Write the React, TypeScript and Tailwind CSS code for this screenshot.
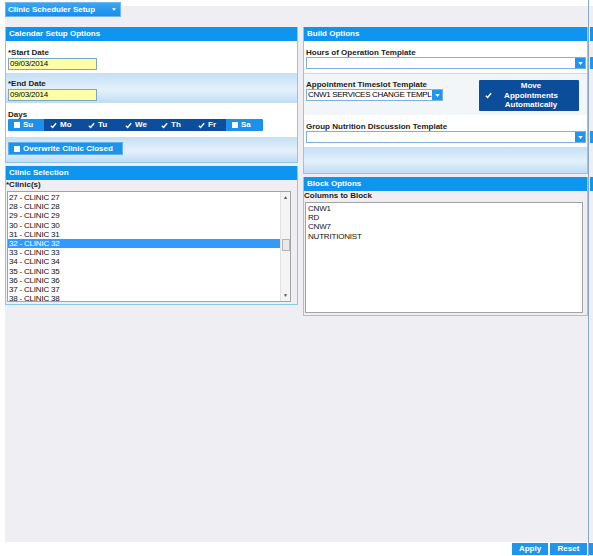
const font = "font-['Liberation_Sans',Arial,sans-serif]";

const clinics = Array.from({ length: 12 }, (_, i) => 27 + i);
const blockColumns = ["CNW1", "RD", "CNW7", "NUTRITIONIST"];
const days = [
  { label: "Su", on: false, w: "w-[36px]" },
  { label: "Mo", on: true, w: "w-[38px]" },
  { label: "Tu", on: true, w: "w-[37px]" },
  { label: "We", on: true, w: "w-[36px]" },
  { label: "Th", on: true, w: "w-[37px]" },
  { label: "Fr", on: true, w: "w-[34px]" },
  { label: "Sa", on: false, w: "w-[37px]" },
];

function Check({ className = "" }: { className?: string }) {
  return (
    <svg viewBox="0 0 8 8" className={"h-[7px] w-[7px] " + className}>
      <path d="M1 4.3 L3 6.3 L7 1.5" fill="none" stroke="white" strokeWidth="1.6" />
    </svg>
  );
}

function Box() {
  return <span className="inline-block h-[6px] w-[6px] bg-white" />;
}

function Arrow() {
  return (
    <span className="flex h-full w-[10px] items-center justify-center bg-[#1e95ee]">
      <svg viewBox="0 0 6 4" className="h-[3px] w-[5px]">
        <path d="M0 0 H6 L3 4 Z" fill="white" />
      </svg>
    </span>
  );
}

function Header({ title }: { title: string }) {
  return (
    <div className="flex h-[14px] items-center bg-[#0e95ef] pl-[3px] text-[8px] font-bold text-white">
      {title}
    </div>
  );
}

const gradient = "bg-[linear-gradient(to_bottom,#c4dff5,#e4f1fb_55%,#c0dcf3)]";

function DateField({ label, value }: { label: string; value: string }) {
  return (
    <div>
      <div className="h-[9px] text-[8px] font-bold leading-[9px] text-[#222]">{label}</div>
      <div className="mt-[1px] flex h-[12px] w-[89px] items-center border border-[#76a9c4] bg-[#ffffa6] pl-[1px] text-[8px] tracking-[-0.2px] text-black">
        {value}
      </div>
    </div>
  );
}

function Select({ value = "", width }: { value?: string; width: string }) {
  return (
    <div className={"flex h-[12px] items-stretch border border-[#7fb2d8] bg-white " + width}>
      <span className="min-w-0 flex-1 overflow-hidden whitespace-nowrap pl-[1px] text-[8px] leading-[10px] tracking-[-0.3px] text-black">
        {value}
      </span>
      <Arrow />
    </div>
  );
}

export default function App() {
  return (
    <div className={"flex h-[556px] w-[593px] overflow-hidden bg-white " + font}>
      <div className="flex w-[588px] flex-col">
        <div className="ml-[5px] mt-[6px] flex h-[536px] flex-col bg-[#efeff3]">
          <div className="-mt-[4px] flex h-[15px] w-[116px] items-center justify-between border border-[#6fb7ee] bg-[linear-gradient(to_bottom,#3aa5f4,#178eea)] pl-[2px] pr-[4px] text-[8px] font-bold text-white">
            <span>Clinic Scheduler Setup</span>
            <svg viewBox="0 0 6 4" className="h-[3px] w-[4px]">
              <path d="M0 0 H6 L3 4 Z" fill="white" />
            </svg>
          </div>

          <div className="mt-[10px] flex items-start">
            {/* left column */}
            <div className="flex w-[293px] flex-col">
              <div className="h-[110px] border-x border-[#8dc7ea] bg-white">
                <Header title="Calendar Setup Options" />
                <div className="h-[32px] px-[2px] pt-[7px]">
                  <DateField label="*Start Date" value="09/03/2014" />
                </div>
                <div className={"h-[30px] px-[2px] pt-[6px] " + gradient}>
                  <DateField label="*End Date" value="09/03/2014" />
                </div>
                <div className="h-[34px] px-[2px] pt-[7px]">
                  <div className="h-[9px] text-[8px] font-bold leading-[9px] text-[#222]">Days</div>
                  <div className="flex h-[12px] w-[255px] overflow-hidden rounded-[1px]">
                    {days.map((d) => (
                      <div
                        key={d.label}
                        className={
                          "flex items-center gap-[3px] pl-[6px] text-[8px] font-bold text-white " +
                          d.w +
                          (d.on ? " bg-[#0c4e9c]" : " bg-[#1b90ec]")
                        }
                      >
                        {d.on ? <Check /> : <Box />}
                        {d.label}
                      </div>
                    ))}
                  </div>
                </div>
              </div>
              <div className={"h-[26px] border-x border-b border-[#8dc7ea] px-[2px] pt-[5px] " + gradient}>
                <div className="flex h-[13px] w-[115px] items-center gap-[3px] border border-[#63b1ec] bg-[#1c93ee] pl-[5px] text-[8px] font-bold text-white">
                  <Box />
                  Overwrite Clinic Closed
                </div>
              </div>

              <div className="mt-[3px] h-[139px] border-x border-b border-[#8dc7ea]">
                <Header title="Clinic Selection" />
                <div className="h-[11px] text-[8px] font-bold leading-[10px] text-[#222]">*Clinic(s)</div>
                <div className="ml-[1px] flex h-[111px] w-[284px] border border-[#a3a3a3] bg-white">
                  <div className="flex-1 pt-[1px] text-[8px] leading-[9.2px] tracking-[-0.2px] text-[#111]">
                    {clinics.map((n) => (
                      <div
                        key={n}
                        className={"pl-[1px] " + (n === 32 ? "bg-[#3399ff] text-white" : "")}
                      >
                        {n} - CLINIC {n}
                      </div>
                    ))}
                  </div>
                  <div className="flex w-[10px] flex-col items-center border-l border-[#e2e2e2] bg-[#f4f4f4]">
                    <span className="mt-[3px] text-[5px] leading-[5px] text-[#555]">▲</span>
                    <div className="mt-[39px] h-[12px] w-[8px] border border-[#b5b5b5] bg-[#e9e9e9]" />
                    <span className="mt-auto mb-[3px] text-[5px] leading-[5px] text-[#555]">▼</span>
                  </div>
                </div>
              </div>
            </div>

            {/* right column */}
            <div className="ml-[5px] flex w-[285px] flex-col">
              <div className="h-[120px] border-x border-[#8dc7ea] bg-white">
                <Header title="Build Options" />
                <div className="h-[32px] px-[2px] pt-[7px]">
                  <div className="h-[9px] text-[8px] font-bold leading-[9px] text-[#222]">Hours of Operation Template</div>
                  <Select width="w-[280px]" />
                </div>
                <div className="flex h-[42px] border-t border-[#b9dbf3] bg-[#f3f6f9] px-[2px] pt-[6px]">
                  <div>
                    <div className="h-[9px] text-[8px] font-bold leading-[9px] text-[#222]">Appointment Timeslot Template</div>
                    <Select value="CNW1 SERVICES CHANGE TEMPL" width="w-[137px]" />
                  </div>
                  <div className="ml-[36px] flex h-[31px] w-[100px] items-center rounded-[1px] bg-[#0c4d9b] text-[8px] font-bold leading-[9.5px] text-white">
                    <Check className="ml-[6px]" />
                    <div className="ml-[3px] flex-1 pr-[12px] text-center">
                      Move
                      <br />
                      Appointments
                      <br />
                      Automatically
                    </div>
                  </div>
                </div>
                <div className="h-[32px] px-[2px] pt-[7px]">
                  <div className="h-[9px] text-[8px] font-bold leading-[9px] text-[#222]">Group Nutrition Discussion Template</div>
                  <Select width="w-[280px]" />
                </div>
              </div>
              <div className={"h-[27px] border-x border-b border-[#8dc7ea] " + gradient} />

              <div className="mt-[3px] h-[139px] border-x border-b border-[#8dc7ea]">
                <Header title="Block Options" />
                <div className="h-[11px] text-[8px] font-bold leading-[10px] text-[#222]">Columns to Block</div>
                <div className="ml-[1px] h-[111px] w-[278px] border border-[#a3a3a3] bg-white pl-[2px] pt-[1px] text-[8px] leading-[9.2px] tracking-[-0.2px] text-[#111]">
                  {blockColumns.map((c) => (
                    <div key={c}>{c}</div>
                  ))}
                </div>
              </div>
            </div>
          </div>
        </div>

        <div className="mt-[1px] flex justify-end gap-[2px] pr-[1px]">
          <div className="flex h-[12px] w-[36px] items-center justify-center bg-[#1e96ee] text-[8px] font-bold text-white">Apply</div>
          <div className="flex h-[12px] w-[37px] items-center justify-center bg-[#1e96ee] text-[8px] font-bold text-white">Reset</div>
        </div>
      </div>

      <div className="w-[1px] bg-[#8aa6c8]" />

      <div className="flex w-[4px] flex-col">
        <div className="mt-[6px] h-[536px] bg-[#efeff3] pl-[1px]">
          <div className="mt-[21px] h-[14px] bg-[#0e95ef]" />
          <div className="mt-[16px] h-[12px] bg-[#1e95ee]" />
          <div className="mt-[62px] h-[12px] bg-[#1e95ee]" />
          <div className="mt-[34px] h-[14px] bg-[#0e95ef]" />
        </div>
        <div className="mt-[1px] h-[12px] bg-[#1e96ee]" />
      </div>
    </div>
  );
}
